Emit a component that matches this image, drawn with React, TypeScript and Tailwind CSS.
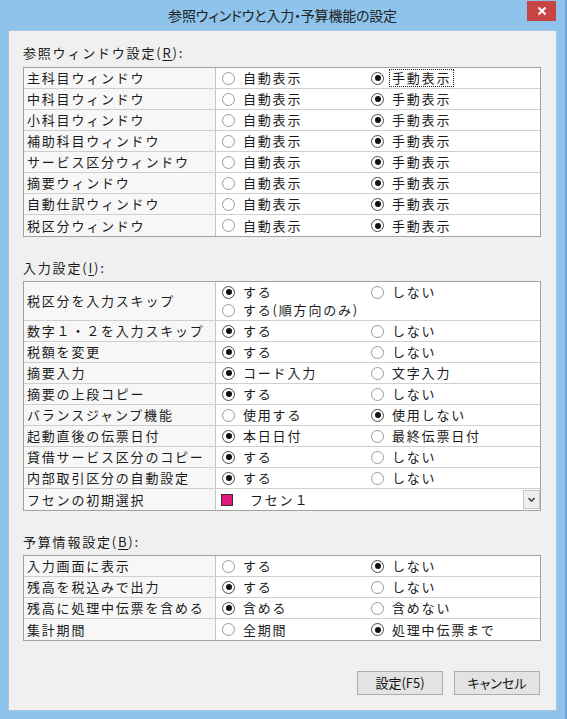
import type { ReactNode } from "react";

type Choice = { label: string; checked?: boolean; focus?: boolean };

type Row = {
  label: string;
  a: Choice;
  b: Choice;
};

const refRows: Row[] = [
  { label: "主科目ウィンドウ", a: { label: "自動表示" }, b: { label: "手動表示", checked: true, focus: true } },
  { label: "中科目ウィンドウ", a: { label: "自動表示" }, b: { label: "手動表示", checked: true } },
  { label: "小科目ウィンドウ", a: { label: "自動表示" }, b: { label: "手動表示", checked: true } },
  { label: "補助科目ウィンドウ", a: { label: "自動表示" }, b: { label: "手動表示", checked: true } },
  { label: "サービス区分ウィンドウ", a: { label: "自動表示" }, b: { label: "手動表示", checked: true } },
  { label: "摘要ウィンドウ", a: { label: "自動表示" }, b: { label: "手動表示", checked: true } },
  { label: "自動仕訳ウィンドウ", a: { label: "自動表示" }, b: { label: "手動表示", checked: true } },
  { label: "税区分ウィンドウ", a: { label: "自動表示" }, b: { label: "手動表示", checked: true } },
];

const inputRows: Row[] = [
  { label: "数字１・２を入力スキップ", a: { label: "する", checked: true }, b: { label: "しない" } },
  { label: "税額を変更", a: { label: "する", checked: true }, b: { label: "しない" } },
  { label: "摘要入力", a: { label: "コード入力", checked: true }, b: { label: "文字入力" } },
  { label: "摘要の上段コピー", a: { label: "する", checked: true }, b: { label: "しない" } },
  { label: "バランスジャンプ機能", a: { label: "使用する" }, b: { label: "使用しない", checked: true } },
  { label: "起動直後の伝票日付", a: { label: "本日日付", checked: true }, b: { label: "最終伝票日付" } },
  { label: "貸借サービス区分のコピー", a: { label: "する", checked: true }, b: { label: "しない" } },
  { label: "内部取引区分の自動設定", a: { label: "する", checked: true }, b: { label: "しない" } },
];

const budgetRows: Row[] = [
  { label: "入力画面に表示", a: { label: "する" }, b: { label: "しない", checked: true } },
  { label: "残高を税込みで出力", a: { label: "する", checked: true }, b: { label: "しない" } },
  { label: "残高に処理中伝票を含める", a: { label: "含める", checked: true }, b: { label: "含めない" } },
  { label: "集計期間", a: { label: "全期間" }, b: { label: "処理中伝票まで", checked: true } },
];

function Radio({ checked }: { checked?: boolean }) {
  return (
    <span
      className={
        checked
          ? "flex h-[13px] w-[13px] shrink-0 items-center justify-center rounded-full border border-[#4a4a4a] bg-white"
          : "flex h-[13px] w-[13px] shrink-0 items-center justify-center rounded-full border border-[#9a9a9a] bg-white"
      }
    >
      {checked && <span className="h-[6px] w-[6px] rounded-full bg-[#111]" />}
    </span>
  );
}

function Option({ choice, wide }: { choice: Choice; wide?: boolean }) {
  return (
    <div className={wide ? "flex w-[149px] items-center gap-[8px]" : "flex items-center gap-[8px]"}>
      <Radio checked={choice.checked} />
      {choice.focus ? (
        <span className="-ml-[3px] border border-dotted border-[#222] px-[2px] leading-[16px]">{choice.label}</span>
      ) : (
        <span>{choice.label}</span>
      )}
    </div>
  );
}

function Label({ children }: { children: ReactNode }) {
  return (
    <div className="flex w-[192px] shrink-0 items-center border-r border-[#c4c4c4] bg-[#f7f7f7] pl-[3px]">
      {children}
    </div>
  );
}

function RadioRow({ row, last }: { row: Row; last?: boolean }) {
  return (
    <div className={last ? "flex h-[21px]" : "flex h-[21px] border-b border-[#cfcfcf]"}>
      <Label>{row.label}</Label>
      <div className="flex flex-1 items-center bg-white pl-[6px]">
        <Option choice={row.a} wide />
        <Option choice={row.b} />
      </div>
    </div>
  );
}

function SectionTitle({ text, hot, first }: { text: string; hot: string; first?: boolean }) {
  return (
    <div className={first ? "mt-[12px] mb-[4px] flex h-[20px] items-center" : "mt-[21px] mb-[3px] flex h-[20px] items-center"}>
      {text}(<span className="underline underline-offset-2">{hot}</span>):
    </div>
  );
}

export default function App() {
  return (
    <div className="flex h-[719px] w-[567px] flex-col border-r-2 border-[#6aa6dc] bg-[#8ec3ec] font-['Noto_Sans_CJK_JP',sans-serif] text-[13px] text-[#1b1b1b]">
      <div className="flex h-[30px] px-[9px]">
        <div className="w-[29px]" />
        <div className="flex flex-1 items-center justify-center text-[14px] tracking-[-0.2px] text-[#222] [font-feature-settings:'palt']">
          参照ウィンドウと入力・予算機能の設定
        </div>
        <div className="mt-[1px] flex h-[20px] w-[29px] items-center justify-center bg-[#c94444]">
          <svg width="10" height="10" viewBox="0 0 10 10">
            <path d="M1.5 1.5 L8.5 8.5 M8.5 1.5 L1.5 8.5" stroke="#fff" strokeWidth="2" />
          </svg>
        </div>
      </div>

      <div className="mx-[8px] mb-[8px] flex flex-1 flex-col border border-[#a9c7e3] bg-[#f0f0f0] pl-[14px] pr-[15px] tracking-[1.8px]">
        <SectionTitle text="参照ウィンドウ設定" hot="R" first />
        <div className="flex flex-col border border-[#a3a3a3] bg-white">
          {refRows.map((row, i) => (
            <RadioRow key={row.label} row={row} last={i === refRows.length - 1} />
          ))}
        </div>

        <SectionTitle text="入力設定" hot="I" />
        <div className="flex flex-col border border-[#a3a3a3] bg-white">
          <div className="flex h-[39px] border-b border-[#cfcfcf]">
            <Label>税区分を入力スキップ</Label>
            <div className="flex flex-1 flex-col justify-center bg-white pl-[6px]">
              <div className="flex h-[18px] items-center">
                <Option choice={{ label: "する", checked: true }} wide />
                <Option choice={{ label: "しない" }} />
              </div>
              <div className="flex h-[18px] items-center">
                <Option choice={{ label: "する(順方向のみ)" }} />
              </div>
            </div>
          </div>
          {inputRows.map((row) => (
            <RadioRow key={row.label} row={row} />
          ))}
          <div className="flex h-[21px]">
            <Label>フセンの初期選択</Label>
            <div className="flex flex-1 items-center bg-white pl-[5px]">
              <span className="h-[12px] w-[12px] shrink-0 border border-[#333] bg-[#e0177c]" />
              <span className="ml-[17px] flex-1">フセン１</span>
              <div className="flex h-[19px] w-[17px] items-center justify-center border border-[#c6c6c6] bg-[#eeeeee]">
                <svg width="9" height="7" viewBox="0 0 9 7">
                  <path d="M1.5 2 L4.5 5 L7.5 2" stroke="#444" strokeWidth="1.6" fill="none" />
                </svg>
              </div>
            </div>
          </div>
        </div>

        <SectionTitle text="予算情報設定" hot="B" />
        <div className="flex flex-col border border-[#a3a3a3] bg-white">
          {budgetRows.map((row, i) => (
            <RadioRow key={row.label} row={row} last={i === budgetRows.length - 1} />
          ))}
        </div>

        <div className="mt-auto mb-[15px] flex justify-end gap-[11px] pr-[1px] tracking-normal [font-feature-settings:'palt']">
          <button className="h-[24px] w-[86px] border border-[#adadad] bg-[#e3e3e3] text-[13px] text-[#111]">
            設定(F5)
          </button>
          <button className="h-[24px] w-[86px] border border-[#adadad] bg-[#e3e3e3] text-[13px] text-[#111]">
            キャンセル
          </button>
        </div>
      </div>
    </div>
  );
}
